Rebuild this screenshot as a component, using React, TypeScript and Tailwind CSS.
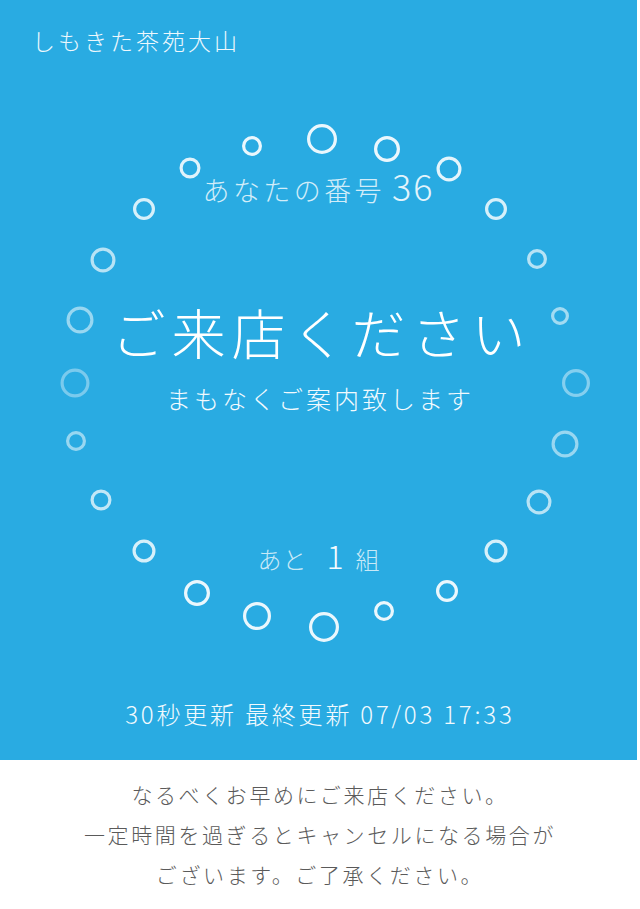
import React from "react";

const circles: [number, number, number, number][] = [
  [322, 139, 30, 0.95],
  [252, 146, 20, 0.95],
  [387, 149, 26, 0.95],
  [190, 168, 21, 0.9],
  [449, 169, 25, 0.92],
  [144, 209, 22, 0.85],
  [496, 209, 22, 0.85],
  [103, 260, 25, 0.7],
  [537, 259, 20, 0.7],
  [80, 320, 27, 0.55],
  [560, 316, 18, 0.6],
  [75, 383, 29, 0.4],
  [576, 383, 28, 0.45],
  [76, 441, 20, 0.55],
  [565, 444, 27, 0.55],
  [101, 500, 21, 0.75],
  [539, 502, 25, 0.7],
  [144, 551, 23, 0.85],
  [496, 551, 23, 0.85],
  [197, 593, 26, 0.95],
  [447, 591, 22, 0.95],
  [257, 616, 28, 0.95],
  [384, 611, 20, 0.95],
  [324, 627, 30, 0.95],
];

export default function App() {
  return (
    <div
      className="w-[640px] h-[909px] bg-white overflow-hidden"
      style={{ fontFamily: '"Noto Sans CJK JP", "Noto Sans", sans-serif' }}
    >
      <div className="relative w-[637px] h-[760px] bg-[#29abe2] text-white flex flex-col">
        <svg
          className="absolute inset-0 pointer-events-none"
          width="637"
          height="760"
          viewBox="0 0 637 760"
        >
          {circles.map(([cx, cy, d, o], i) => (
            <circle
              key={i}
              cx={cx}
              cy={cy}
              r={(d - 3.2) / 2}
              fill="none"
              stroke="#f4fbfe"
              strokeWidth={3.2}
              opacity={o}
            />
          ))}
        </svg>
        <p className="relative pl-[32px] pt-[25px] text-[23px] leading-[30px] h-[55px] text-[#eef8fd] font-light tracking-[3px]">
          しもきた茶苑大山
        </p>
        <p className="relative mt-[110px] h-[40px] flex justify-center items-baseline leading-[40px] font-light text-[#d2edf9]">
          <span className="text-[27px] tracking-[3.4px]">あなたの番号</span>
          <span className="text-[36px] tracking-[2px] ml-[7px] text-[#e2f4fc]">36</span>
        </p>
        <p className="relative mt-[97px] h-[60px] text-center text-[54px] leading-[60px] font-light tracking-[6px] pl-[6px]">
          ご来店ください
        </p>
        <p className="relative mt-[20px] h-[32px] text-center text-[25px] leading-[32px] font-light tracking-[3px] pl-[3px] text-[#f2fafe]">
          まもなくご案内致します
        </p>
        <p className="relative mt-[121px] h-[40px] flex justify-center items-baseline leading-[40px] font-light text-[#c8e9f7]">
          <span className="text-[24px] tracking-[1px]">あと</span>
          <span className="text-[32px] ml-[19px] text-[#f4fbfe]">1</span>
          <span className="text-[24px] ml-[12px]">組</span>
        </p>
        <p className="relative mt-[124px] h-[30px] text-center text-[24px] leading-[30px] font-light text-[#f2fafe] tracking-[2.8px] pl-[2.8px]">
          30秒更新 最終更新 07/03 17:33
        </p>
      </div>
      <div className="pt-[14px] text-center text-[21px] leading-[40px] text-[#5a5a5a] font-light tracking-[2.6px]">
        <p>なるべくお早めにご来店ください。</p>
        <p>一定時間を過ぎるとキャンセルになる場合が</p>
        <p>ございます。ご了承ください。</p>
      </div>
    </div>
  );
}
